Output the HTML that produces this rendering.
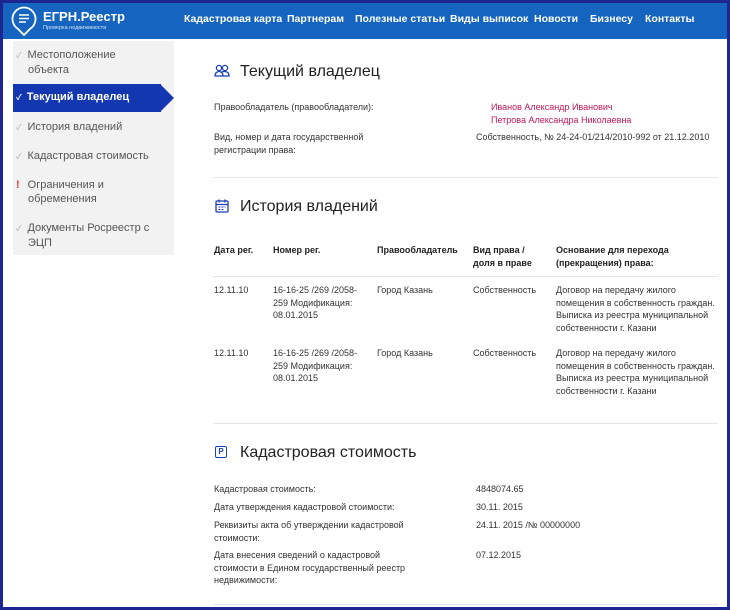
<!DOCTYPE html>
<html><head><meta charset="utf-8"><style>
*{margin:0;padding:0;box-sizing:border-box}
body{width:730px;height:610px;position:relative;background:#fff;font-family:"Liberation Sans","Noto Sans CJK SC",sans-serif;color:#333;overflow:hidden}
.frame{position:absolute;left:0;top:0;width:730px;height:610px;border:3px solid #1c2590;z-index:9;pointer-events:none}
.hdr{position:absolute;left:0;top:0;width:730px;height:39px;background:#1565c0}
.a{position:absolute;white-space:nowrap}
.nav{font-size:10.5px;color:#fff;font-weight:bold;top:13px}
.side{position:absolute;left:13px;top:41px;width:161px;height:214px;background:#f2f2f2}
.si{position:absolute;left:16px;font-size:11px;color:#555;line-height:14px}
.si b{color:#aaa;font-weight:normal;font-size:8px;margin-right:6px}
.t{font-size:9px;color:#333;line-height:12.5px}
.th{font-size:9px;font-weight:bold;color:#222;line-height:12.5px}
.h{font-size:16px;color:#222}
.hr{position:absolute;left:213px;width:505px;height:1px;background:#e6e6e6}
</style></head><body>
<div class="hdr"></div>
<svg class="a" style="left:10px;top:3px" width="28" height="34" viewBox="0 0 28 34"><path d="M14 32 L7.5 25.5 A11.5 11.5 0 1 1 20.5 25.5 Z" fill="none" stroke="#fff" stroke-width="1.8"/><path d="M9 12h10M9 15.5h10M9 19h7" stroke="#fff" stroke-width="1.6"/></svg>
<div class="a" style="left:43px;top:9px;font-size:13px;color:#fff;font-weight:bold">ЕГРН.Реестр</div>
<div class="a" style="left:43px;top:25px;font-size:5.5px;color:#cfe0f5">Проверка недвижимости</div>
<div class="a nav" style="left:184px">Кадастровая карта</div>
<div class="a nav" style="left:287px">Партнерам</div>
<div class="a nav" style="left:355px">Полезные статьи</div>
<div class="a nav" style="left:450px">Виды выписок</div>
<div class="a nav" style="left:534px">Новости</div>
<div class="a nav" style="left:590px">Бизнесу</div>
<div class="a nav" style="left:645px">Контакты</div>

<div class="side"></div>
<div class="a si" style="top:48px">
<b>✓</b>Местоположение<br><span style="padding-left:12px">объекта</span></div>
<div class="a" style="left:13px;top:84px;width:148px;height:28px;background:#1337b0"></div>
<div class="a" style="left:160px;top:84px;width:0;height:0;border-top:14px solid transparent;border-bottom:14px solid transparent;border-left:14px solid #1337b0"></div>
<div class="a" style="left:16px;top:91px;font-size:11px;color:#fff;font-weight:bold"><span style="font-size:8px;margin-right:5px">✓</span>Текущий владелец</div>
<div class="a si" style="top:120px"><b>✓</b>История владений</div>
<div class="a si" style="top:149px"><b>✓</b>Кадастровая стоимость</div>
<div class="a si" style="top:178px"><b style="color:#e53935;font-weight:bold;font-size:11px;margin-right:8px">!</b>Ограничения и<br><span style="padding-left:12px">обременения</span></div>
<div class="a si" style="top:221px"><b>✓</b>Документы Росреестр с<br><span style="padding-left:12px">ЭЦП</span></div>

<svg class="a" style="left:214px;top:64px" width="16" height="14" viewBox="0 0 16 14"><circle cx="5" cy="4" r="2.6" fill="none" stroke="#1a3fb0" stroke-width="1.3"/><circle cx="11" cy="4" r="2.6" fill="none" stroke="#1a3fb0" stroke-width="1.3"/><path d="M1 12c0-3 2-4.5 4-4.5s4 1.5 4 4.5zM7 8.2c1-.5 2-.7 4-.7 2 0 4 1.5 4 4.5H9" fill="none" stroke="#1a3fb0" stroke-width="1.3"/></svg>
<div class="a h" style="left:240px;top:63px">Текущий владелец</div>
<div class="a t" style="left:214px;top:101px">Правообладатель (правообладатели):</div>
<div class="a t" style="left:491px;top:101px;color:#c2185b">Иванов Александр Иванович<br>Петрова Александра Николаевна</div>
<div class="a t" style="left:214px;top:131px">Вид, номер и дата государственной<br>регистрации права:</div>
<div class="a t" style="left:476px;top:131px">Собственность, № 24-24-01/214/2010-992 от 21.12.2010</div>
<div class="hr" style="top:177px"></div>

<svg class="a" style="left:215px;top:199px" width="14" height="14" viewBox="0 0 14 14"><rect x="1" y="2" width="12" height="11" rx="1" fill="none" stroke="#1a3fb0" stroke-width="1.3"/><path d="M1 5.5h12M4 0.5v3M10 0.5v3" stroke="#1a3fb0" stroke-width="1.3"/><path d="M3.5 8h2M6.5 8h2M9.5 8h1M3.5 10.5h2M6.5 10.5h2" stroke="#1a3fb0" stroke-width="1"/></svg>
<div class="a h" style="left:240px;top:198px">История владений</div>
<div class="a th" style="left:214px;top:244px">Дата рег.</div>
<div class="a th" style="left:273px;top:244px">Номер рег.</div>
<div class="a th" style="left:377px;top:244px">Правообладатель</div>
<div class="a th" style="left:473px;top:244px">Вид права /<br>доля в праве</div>
<div class="a th" style="left:556px;top:244px">Основание для перехода<br>(прекращения) права:</div>
<div class="hr" style="top:276px"></div>
<div class="a t" style="left:214px;top:284px">12.11.10</div>
<div class="a t" style="left:273px;top:284px">16-16-25 /269 /2058-<br>259 Модификация:<br>08.01.2015</div>
<div class="a t" style="left:377px;top:284px">Город Казань</div>
<div class="a t" style="left:473px;top:284px">Собственность</div>
<div class="a t" style="left:556px;top:284px">Договор на передачу жилого<br>помещения в собственность граждан.<br>Выписка из реестра муниципальной<br>собственности г. Казани</div>
<div class="a t" style="left:214px;top:347px">12.11.10</div>
<div class="a t" style="left:273px;top:347px">16-16-25 /269 /2058-<br>259 Модификация:<br>08.01.2015</div>
<div class="a t" style="left:377px;top:347px">Город Казань</div>
<div class="a t" style="left:473px;top:347px">Собственность</div>
<div class="a t" style="left:556px;top:347px">Договор на передачу жилого<br>помещения в собственность граждан.<br>Выписка из реестра муниципальной<br>собственности г. Казани</div>
<div class="hr" style="top:423px"></div>

<div class="a" style="left:215px;top:446px;width:12px;height:12px;border:1.5px solid #1a3fb0;border-radius:2px;font-size:8px;font-weight:bold;color:#1a3fb0;text-align:center;line-height:9px">P</div>
<div class="a h" style="left:240px;top:444px">Кадастровая стоимость</div>
<div class="a t" style="left:214px;top:483px">Кадастровая стоимость:</div>
<div class="a t" style="left:476px;top:483px">4848074.65</div>
<div class="a t" style="left:214px;top:501px">Дата утверждения кадастровой стоимости:</div>
<div class="a t" style="left:476px;top:501px">30.11. 2015</div>
<div class="a t" style="left:214px;top:519px">Реквизиты акта об утверждении кадастровой<br>стоимости:</div>
<div class="a t" style="left:476px;top:519px">24.11. 2015 /№ 00000000</div>
<div class="a t" style="left:214px;top:549px">Дата внесения сведений о кадастровой<br>стоимости в Едином государственный реестр<br>недвижимости:</div>
<div class="a t" style="left:476px;top:549px">07.12.2015</div>
<div class="hr" style="top:604px"></div>
<div class="frame"></div>
</body></html>
